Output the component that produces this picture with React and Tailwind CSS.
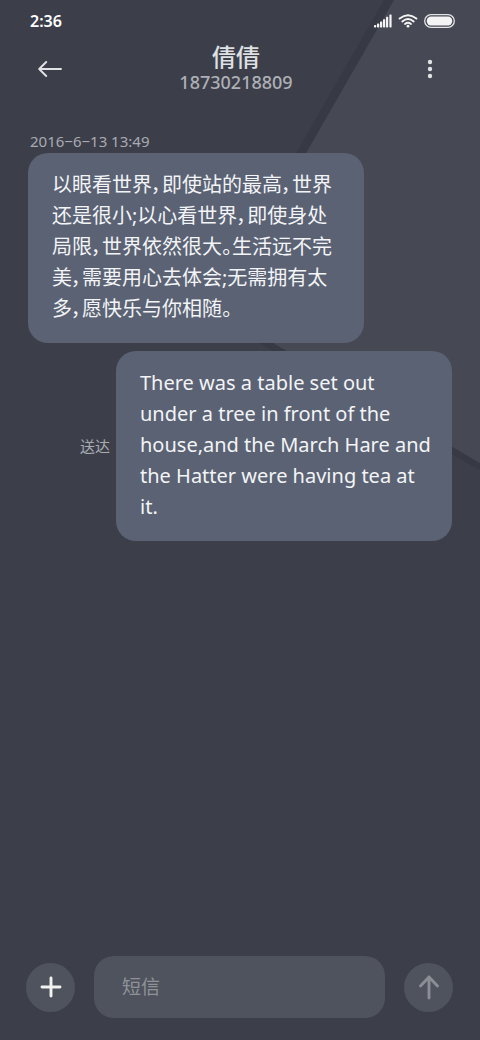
import React from "react";

const messages = [
  {
    id: 1,
    lang: "zh-CN",
    text: "以眼看世界，即使站的最高，世界还是很小;以心看世界，即使身处局限，世界依然很大。生活远不完美，需要用心去体会;无需拥有太多，愿快乐与你相随。",
    sent: false,
  },
  {
    id: 2,
    lang: "en",
    text: "There was a table set out under a tree in front of the house,and the March Hare and the Hatter were having tea at it.",
    sent: true,
    status: "送达",
  },
];

function Backdrop() {
  return (
    <svg
      className="pointer-events-none absolute inset-y-0 right-0 -z-10"
      width="480"
      height="1040"
      viewBox="0 0 480 1040"
      aria-hidden="true"
    >
      <path d="M384 0H480V470.5L205 312Z" fill="#373a45" />
      <path d="M394 0H480V463L216 310Z" fill="#464954" />
    </svg>
  );
}

function SignalIcon() {
  return (
    <svg width="18" height="14" viewBox="0 0 18 14" fill="#f4f4f4" aria-hidden="true">
      <rect x="0" y="11" width="2.2" height="2.4" rx="0.6" />
      <rect x="3" y="9.4" width="2.2" height="4" rx="0.6" />
      <rect x="6" y="7.4" width="2.2" height="6" rx="0.6" />
      <rect x="9" y="5.2" width="2.2" height="8.2" rx="0.6" />
      <rect x="12" y="2.8" width="2.2" height="10.6" rx="0.6" />
      <rect x="15.4" y="0.4" width="2.2" height="13" rx="0.6" />
    </svg>
  );
}

function WifiIcon() {
  return (
    <svg
      width="20"
      height="14"
      viewBox="0 0 20 14"
      fill="none"
      stroke="#f4f4f4"
      strokeWidth="1.9"
      strokeLinecap="round"
      aria-hidden="true"
    >
      <path d="M1.6 4.6Q10 -2.2 18.4 4.6" />
      <path d="M4.3 7.4Q10 2.8 15.7 7.4" />
      <path d="M7 10Q10 7.6 13 10" />
      <circle cx="10" cy="12.2" r="1.4" fill="#f4f4f4" stroke="none" />
    </svg>
  );
}

function BatteryIcon() {
  return (
    <svg width="31" height="14" viewBox="0 0 31 14" aria-hidden="true">
      <rect x="0.7" y="0.7" width="29.6" height="12.6" rx="6.3" fill="none" stroke="#e4e4e6" strokeWidth="1.3" />
      <rect x="2.8" y="2.6" width="25.4" height="8.8" rx="4.2" fill="#f4f4f4" />
    </svg>
  );
}

function StatusBar() {
  return (
    <div className="flex h-[42px] items-center justify-between pr-[25px] pl-[30px]">
      <span className="text-base font-semibold text-white">2:36</span>
      <div className="flex items-center gap-[6px]">
        <SignalIcon />
        <WifiIcon />
        <BatteryIcon />
      </div>
    </div>
  );
}

function Header() {
  return (
    <header className="flex h-[54px] items-center pr-5 pl-7">
      <button type="button" aria-label="返回" className="flex h-11 w-11 items-center justify-center">
        <svg
          width="24"
          height="16"
          viewBox="0 0 24 16"
          fill="none"
          stroke="#e2e2e5"
          strokeWidth="1.9"
          strokeLinecap="round"
          strokeLinejoin="round"
          aria-hidden="true"
        >
          <path d="M23 8H1.2M8.2 1L1.2 8L8.2 15" />
        </svg>
      </button>
      <div className="flex min-w-0 flex-1 flex-col items-center">
        <h1 className="text-2xl leading-[26px] font-medium text-[#dfe0e3]">倩倩</h1>
        <p className="text-lg leading-6 font-medium text-[#aeb0b6]">18730218809</p>
      </div>
      <button type="button" aria-label="更多" className="flex h-11 w-[60px] items-center justify-center">
        <svg width="6" height="20" viewBox="0 0 6 20" fill="#e2e2e5" aria-hidden="true">
          <circle cx="3" cy="3" r="2.2" />
          <circle cx="3" cy="10" r="2.2" />
          <circle cx="3" cy="17" r="2.2" />
        </svg>
      </button>
    </header>
  );
}

function Message({ message }) {
  return (
    <li className={message.sent ? "flex items-center justify-end gap-[6px]" : "flex items-center"}>
      {message.status && (
        <span className="shrink-0 text-[15px] text-[#a9abb2]">{message.status}</span>
      )}
      <p
        lang={message.lang}
        className="w-[336px] rounded-[20px] bg-[#5a6274] pt-4 pr-5 pb-[19px] pl-6 text-xl leading-[31px] text-[#f3f4f6] [font-feature-settings:'palt']"
      >
        {message.text}
      </p>
    </li>
  );
}

function Composer() {
  return (
    <form
      className="flex items-center gap-[19px] pt-5 pr-[27px] pb-[22px] pl-[26px]"
      onSubmit={(event) => event.preventDefault()}
    >
      <button
        type="button"
        aria-label="添加"
        className="flex h-[49px] w-[49px] shrink-0 items-center justify-center rounded-full bg-[#4f535d]"
      >
        <svg width="22" height="22" viewBox="0 0 22 22" stroke="#f2f2f3" strokeWidth="2.9" strokeLinecap="round" aria-hidden="true">
          <path d="M11 2V20M2 11H20" />
        </svg>
      </button>
      <input
        type="text"
        aria-label="短信"
        placeholder="短信"
        className="h-[62px] min-w-0 flex-1 rounded-[20px] bg-[#4f535d] px-7 text-[19px] text-[#f3f4f6] outline-none placeholder:text-[#8f9299]"
      />
      <button
        type="submit"
        aria-label="发送"
        className="flex h-[49px] w-[49px] shrink-0 items-center justify-center rounded-full bg-[#4f535d]"
      >
        <svg
          width="22"
          height="26"
          viewBox="0 0 22 26"
          fill="none"
          stroke="#8b8e94"
          strokeWidth="2.9"
          strokeLinecap="round"
          strokeLinejoin="round"
          aria-hidden="true"
        >
          <path d="M11 24V3M2.5 12L11 3L19.5 12" />
        </svg>
      </button>
    </form>
  );
}

export default function App() {
  return (
    <div className="relative isolate flex min-h-screen flex-col overflow-hidden bg-[#3c3f4a] font-['Noto_Sans','Noto_Sans_CJK_SC',sans-serif]">
      <Backdrop />
      <StatusBar />
      <Header />
      <main className="flex-1 px-7 pt-[33px]">
        <time dateTime="2016-06-13T13:49" className="block pl-[2px] text-[15px] leading-6 text-[#a9abb2]">
          2016−6−13 13:49
        </time>
        <ul className="flex flex-col gap-2">
          {messages.map((message) => (
            <Message key={message.id} message={message} />
          ))}
        </ul>
      </main>
      <Composer />
    </div>
  );
}
